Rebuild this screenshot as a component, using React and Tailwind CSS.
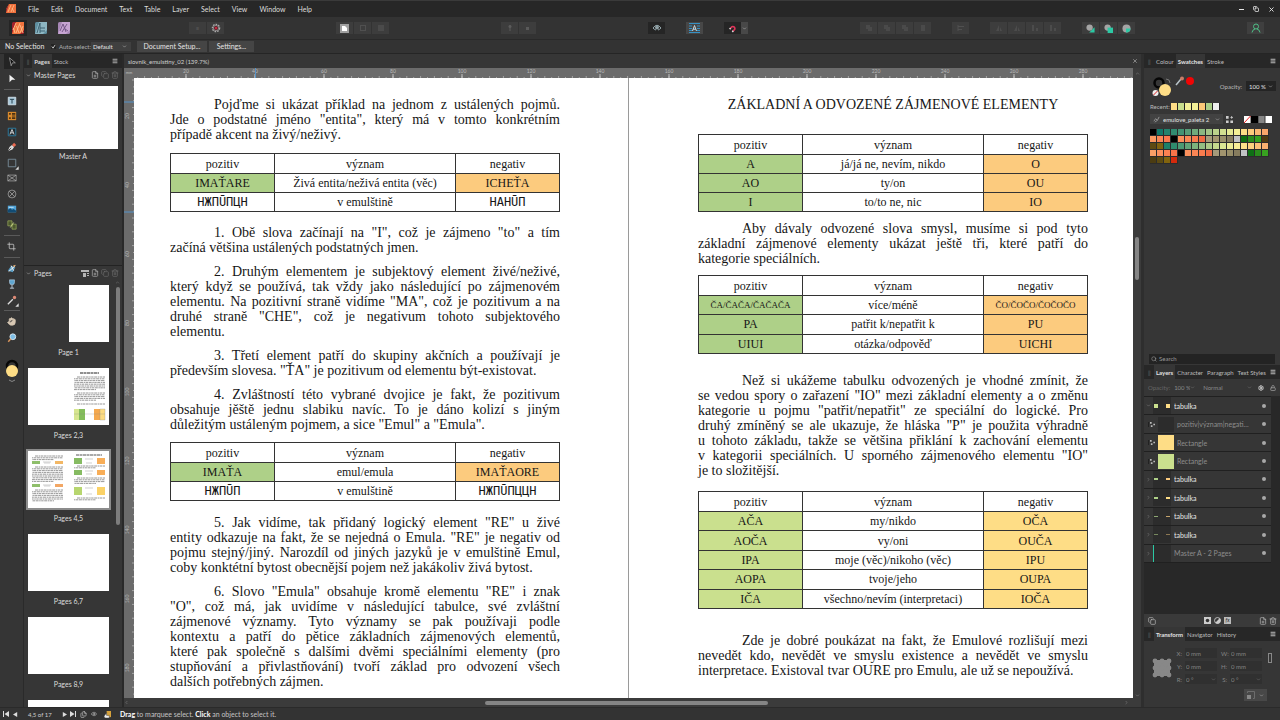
import {
  ChevronDown,
  ChevronRight,
  ChevronLeft,
  ChevronUp,
  Copy,
  Crop,
  Eye,
  FilePlus,
  Files,
  Hand,
  Lock,
  Menu,
  Search,
  Settings,
  Trash2,
  X,
} from 'lucide-react';

const MENU = ['File', 'Edit', 'Document', 'Text', 'Table', 'Layer', 'Select', 'View', 'Window', 'Help'];

const GREEN = 'bg-[#aed088]';
const ORANGE = 'bg-[#fccb7e]';
const LIME = 'bg-[#cae08e]';
const YELLOW = 'bg-[#fedd86]';

const PALETTE = [
  '#000000', '#12786a', '#21826d', '#318a70', '#439374', '#579d78', '#70aa7c', '#8ab781', '#a3c486', '#bbd28b', '#d1df90', '#e4e994', '#f3f096', '#fddc86', '#fdcb7c', '#fbb873', '#faa66a',
  '#fb9861', '#fa8757', '#f9784e', '#000000', '#fb905c', '#fb8755', '#f97b4e', '#f06a42', '#a79c7c', '#a39670', '#99906a', '#857c60', '#c0c2c4', '#0d6d12', '#2a8c1c', '#35a01f', '#4e3b12',
  '#5e4a12', '#80620f', '#1d8069', '#2f8b6d', '#4b9a73', '#62a578', '#7cb27d', '#93be82', '#acca87', '#c4d88c', '#dae592', '#ecec95', '#f8ee96', '#fde08a', '#fdd080', '#fcc078', '#fab06f',
  '#fa9f66', '#fb8f5c', '#fa8152', '#f97449', '#000000', '#fb905c', '#fb8655', '#fa7c4e', '#f06c44', '#a49a7a', '#a1946e', '#978d68', '#867c5e', '#c0c2c4', '#0e7014', '#2a8c1c', '#38a220',
  '#4b3c12', '#5d4b12', '#82640e', '#d42a0c',
];

const LEFT_TABLE_1 = [
  ['IMAŤARE', 'Živá entita/neživá entita (věc)', 'ICHEŤA'],
  ['HЖПŪПЦH', 'v emulštině', 'HAHŪП'],
];
const LEFT_TABLE_2 = [
  ['IMAŤA', 'emul/emula', 'IMAŤAORE'],
  ['HЖПŪП', 'v emulštině', 'HЖПŪПЦЦH'],
];
const BASIC = [
  ['A', 'já/já ne, nevím, nikdo', 'O'],
  ['AO', 'ty/on', 'OU'],
  ['I', 'to/to ne, nic', 'IO'],
];
const SPECIAL = [
  ['ČA/ČAČA/ČAČAČA', 'více/méně', 'ČO/ČOČO/ČOČOČO'],
  ['PA', 'patřit k/nepatřit k', 'PU'],
  ['UIUI', 'otázka/odpověď', 'UICHI'],
];
const DERIVED = [
  ['AČA', 'my/nikdo', 'OČA'],
  ['AOČA', 'vy/oni', 'OUČA'],
  ['IPA', 'moje (věc)/nikoho (věc)', 'IPU'],
  ['AOPA', 'tvoje/jeho', 'OUPA'],
  ['IČA', 'všechno/nevím (interpretaci)', 'IOČA'],
];

function Para({ lines, className = '' }) {
  return (
    <p className={`text-[14px] leading-[15px] ${className}`}>
      {lines.map((line, i) => {
        const last = i === lines.length - 1;
        return (
          <span
            key={i}
            className={`block whitespace-nowrap ${i === 0 ? 'pl-11' : ''} ${last ? '' : '[text-align-last:justify]'}`}
          >
            {line}
          </span>
        );
      })}
    </p>
  );
}

function WordTable({ rows, left, right, className, script }) {
  return (
    <table className={`w-full table-fixed border-collapse text-center text-[12px] leading-4 ${className}`}>
      <colgroup>
        <col className="w-[104px]" />
        <col />
        <col className="w-[104px]" />
      </colgroup>
      <thead>
        <tr>
          {['pozitiv', 'význam', 'negativ'].map((h) => (
            <th key={h} className="h-5 border border-[#333] p-0 font-normal">{h}</th>
          ))}
        </tr>
      </thead>
      <tbody>
        {rows.map((row, i) => {
          const glyphs = script && i === rows.length - 1;
          const side = glyphs
            ? "font-['DejaVu_Sans_Mono',monospace] text-[12px]"
            : row[0].length > 10
              ? 'text-[9px]'
              : 'text-[12px]';
          return (
            <tr key={row[0]}>
              <td className={`border border-[#333] p-0 ${side} ${glyphs ? '' : left}`}>{row[0]}</td>
              <td className="border border-[#333] p-0">{row[1]}</td>
              <td className={`border border-[#333] p-0 ${side} ${glyphs ? '' : right}`}>{row[2]}</td>
            </tr>
          );
        })}
      </tbody>
    </table>
  );
}

function ToolGroup({ children }) {
  return <div className="flex gap-px">{children}</div>;
}

function ToolButton({ label, className = 'w-[17px] bg-[#3d3d3d]', children }) {
  return (
    <button type="button" aria-label={label} className={`flex h-3 items-center justify-center ${className}`}>
      {children}
    </button>
  );
}

function Persona({ from, to, line, d }) {
  return (
    <svg viewBox="0 0 12 12" className="size-3">
      <rect width="12" height="12" rx="1.5" fill={from} />
      <path d="M4 0H12V8L8 12H0Z" fill={to} />
      <path d={d} fill="none" stroke={line} strokeWidth="0.9" />
    </svg>
  );
}

const STRIPES = 'M1 8L4 1M3 11L1.500 6M4 11L8 1M7 11L4.500 4M8 11L11 4M11 11L8 3';

function Toolbar() {
  return (
    <div className="flex h-[23px] shrink-0 items-center border-b border-[#292929] bg-[#333] pr-4 pl-[9px]">
      <div className="flex items-center gap-[5px] pr-1">
        <button type="button" aria-label="Publisher" className="flex h-4 w-[18px] items-center justify-center bg-[#252525]">
          <Persona from="#a3202a" to="#f2733d" line="#ffc08a" d={STRIPES} />
        </button>
        <button type="button" aria-label="Designer" className="flex w-[18px] justify-center">
          <Persona from="#5f8fa0" to="#8db7c3" line="#35596a" d="M2 11L5 1V11M5 6H10M5 9H10" />
        </button>
        <button type="button" aria-label="Photo" className="flex w-[18px] justify-center">
          <Persona from="#a687b5" to="#c6a4d2" line="#6d5080" d="M2 9L5 2L8 10M4 10L9 2M7 7L10 9" />
        </button>
      </div>
      <div className="flex-1" />
      <ToolGroup>
        <ToolButton label="Defaults"><span className="text-[6px] text-[#5a5a5a]">≡</span></ToolButton>
        <ToolButton label="Preflight">
          <svg viewBox="0 0 12 12" className="size-[10px]">
            <circle cx="6" cy="6" r="4.300" fill="none" stroke="#aaa" strokeWidth="1.600" strokeDasharray="2 1.200" />
            <circle cx="6" cy="6" r="3.200" fill="#3a2a2c" stroke="#d0d0d0" strokeWidth="0.600" />
            <circle cx="6" cy="6" r="1.800" fill="#c0283e" />
          </svg>
        </ToolButton>
      </ToolGroup>
      <div className="flex-1" />
      <ToolGroup>
        <ToolButton label="Insert target">
          <svg viewBox="0 0 9 9" className="size-[9px]"><path d="M0 0H9V9H0Z" fill="#a0a0a0" /><path d="M2 2H5L7 4V7H2Z" fill="#fff" /></svg>
        </ToolButton>
        <ToolButton label="Insert behind"><span className="size-[6px] border border-[#505050]" /></ToolButton>
        <ToolButton label="Insert inside"><span className="size-[6px] bg-[#4b4b4b]" /></ToolButton>
      </ToolGroup>
      <div className="flex-1" />
      <ToolGroup>
        <ToolButton label="Pin to text">
          <svg viewBox="0 0 8 8" className="size-2"><path d="M4 1V7" stroke="#5c5c5c" /><circle cx="4" cy="2.500" r="1.500" fill="#5c5c5c" /></svg>
        </ToolButton>
        <ToolButton label="Pin settings"><span className="size-[3px] bg-[#5a5a5a]" /></ToolButton>
      </ToolGroup>
      <div className="flex-1" />
      <div className="flex gap-[21px]">
        <ToolButton label="Preview mode" className="w-[17px] bg-[#252525]">
          <svg viewBox="0 0 10 8" className="h-2 w-[10px]" fill="none" stroke="#93a5aa">
            <path d="M1 4Q5-1.500 9 4Q7 6 6 6M1 4Q2 5.500 4 6" />
            <circle cx="5" cy="3.500" r="1.500" fill="#93a5aa" />
          </svg>
        </ToolButton>
        <ToolButton label="Text frame baseline" className="w-[17px] bg-[#474747]">
          <svg viewBox="0 0 11 10" className="h-[10px] w-[11px]">
            <path d="M0 .5H11M0 3H3M8 3H11M0 5.500H3M8 5.500H11M0 7.500H3M8 7.500H11M0 9.500H11" stroke="#3590c4" />
            <path d="M3.500 8L5.500 2.500L7.500 8M4.200 6.200H6.800" fill="none" stroke="#c6d8e0" />
          </svg>
        </ToolButton>
        <div className="flex">
          <ToolButton label="Snapping" className="w-[17px] bg-[#252525]">
            <svg viewBox="0 0 10 10" className="size-[9px]" fill="none" strokeWidth="1.800">
              <path d="M2.500 5L4.500 3A2.300 2.300 0 0 1 7.500 6L5.500 8" stroke="#e0355a" />
              <path d="M2.800 4.700L1.800 5.700M5.800 7.700L4.800 8.700" stroke="#e8e8e8" />
            </svg>
          </ToolButton>
          <ToolButton label="Snapping options" className="w-[7px] bg-[#484848]"><ChevronDown size={5} color="#ddd" /></ToolButton>
        </div>
      </div>
      <div className="flex-1" />
      <div className="flex gap-[21px]">
        <ToolGroup>
          {['Back one', 'Move back', 'Move forward', 'Bring front'].map((l, i) => (
            <ToolButton key={l} label={l}>
              <svg viewBox="0 0 8 8" className="size-2"><path d={i === 3 ? 'M2 1H6V7H2Z' : 'M1 1H5V3H7V7H3V5H1Z'} fill="#4a4a4a" /></svg>
            </ToolButton>
          ))}
        </ToolGroup>
        <ToolButton label="Alignment"><svg viewBox="0 0 8 8" className="size-2"><path d="M1 1V7M1 2.500H7M1 5.500H5" stroke="#505050" /></svg></ToolButton>
        <ToolGroup>
          {['Flip horizontal', 'Flip vertical', 'Rotate left', 'Rotate right'].map((l, i) => (
            <ToolButton key={l} label={l}>
              <svg viewBox="0 0 8 8" className="size-2"><path d={i < 2 ? 'M1 7L4 1V7ZM5 3L7 7H5Z' : 'M1 1H3V7H1ZM5 4H7V7H5Z'} fill="#4c4c4c" /></svg>
            </ToolButton>
          ))}
        </ToolGroup>
        <ToolGroup>
          <ToolButton label="Add">
            <svg viewBox="0 0 10 10" className="size-[9px]"><path d="M9.500 3.500V9.500H3.500Z" fill="#2cc9a4" /><circle cx="4" cy="4" r="3.500" fill="#a4a4a4" /></svg>
          </ToolButton>
          <ToolButton label="Subtract">
            <svg viewBox="0 0 10 10" className="size-[9px]"><circle cx="4" cy="4" r="3.500" fill="#a4a4a4" /><path d="M4 4H10V10H4Z" fill="#2cc9a4" /></svg>
          </ToolButton>
          <ToolButton label="Intersect">
            <svg viewBox="0 0 10 10" className="size-[9px]"><circle cx="5" cy="5" r="4.500" fill="#a4a4a4" /><path d="M4.500 5H9.500A4.500 4.500 0 0 1 4.500 9.500Z" fill="#2cc9a4" /></svg>
          </ToolButton>
        </ToolGroup>
      </div>
      <div className="flex-1" />
      <ToolButton label="Account" className="w-[17px] bg-[#3f3f3f]">
        <svg viewBox="0 0 10 10" className="size-[10px]" fill="none" stroke="#4fbf87">
          <circle cx="5" cy="3.500" r="2.500" />
          <path d="M1 9.500Q1.500 6.500 4 6M6 6Q8.500 6.500 9 9.500" />
        </svg>
      </ToolButton>
    </div>
  );
}

function ContextBar() {
  return (
    <div className="flex h-[14px] shrink-0 items-center border-b border-[#252525] bg-[#333] pl-[5px] text-[7px] text-[#e4e4e4]">
      <span className="w-[42px] whitespace-nowrap">No Selection</span>
      <label className="ml-1 flex w-[36px] items-center gap-[3px] text-[6px] whitespace-nowrap text-[#b0b0b0]">
        <span className="flex size-[5px] items-center justify-center bg-[#222]">
          <input type="checkbox" defaultChecked className="absolute size-[5px] appearance-none" />
          <svg viewBox="0 0 6 6" className="size-[5px]"><path d="M1 3L2.500 5L5 1" fill="none" stroke="#ddd" /></svg>
        </span>
        Auto-select:
      </label>
      <div className="ml-1 flex h-[9px] w-10 items-center bg-[#404040] pr-1 pl-[2px] text-[6px]">
        <select aria-label="Auto-select" className="min-w-0 flex-1 appearance-none">
          <option>Default</option>
        </select>
        <ChevronDown size={5} />
      </div>
      <button type="button" className="ml-[6px] h-[11px] w-[70px] bg-[#454545] leading-[11px]">Document Setup...</button>
      <button type="button" className="ml-[2px] h-[11px] w-[45px] bg-[#454545] leading-[11px]">Settings...</button>
    </div>
  );
}

const TOOL_GROUPS = [
  {
    height: 'h-8',
    tools: [
      ['Move', <path d="M3 1L10 7H6.500L5 10.500Z" fill="#111" stroke="#bbb" strokeWidth="0.800" />],
      ['Node', <path d="M3 1L10 7H6L3 10Z" fill="#f2f2f2" />],
    ],
  },
  {
    height: 'h-[139px]',
    tools: [
      ['Frame text', <><path d="M1.500 1.500H10.500V10.500H1.500Z" fill="#a9c9da" stroke="#d7e6ee" /><path d="M3.500 4H8.500M6 4V9" stroke="#27414f" strokeWidth="1.200" /></>],
      ['Table', <><path d="M1 1H11V11H1Z" fill="#d88a2c" /><path d="M2.500 2.500H4.500V4.500H2.500ZM2.500 7.500H4.500V9.500H2.500ZM6 2.500H10V4.500H6ZM6 7.500H10V9.500H6ZM6 5.500H10V6.500H6Z" fill="#4a3012" /></>],
      ['Artistic text', <><path d="M1.500 1.500H10.500V10.500H1.500Z" fill="#222b30" stroke="#2f86ad" /><path d="M3.500 9L6 3L8.500 9M4.500 7H7.500" fill="none" stroke="#eee" /></>],
      ['Pen', <><path d="M1 11L3 6L6 3.500L8.500 6L6.500 9Z" fill="#ddd" /><path d="M6 3.500L8.500 1L11 3.500L8.500 6Z" fill="#ec6a50" /><path d="M1 11L5 7" stroke="#333" /></>],
      ['Rectangle', <><path d="M1.500 1.500H10.500V10.500H1.500Z" fill="none" stroke="#7d94a2" /><path d="M14 10V14H10Z" fill="#ddd" /></>],
      ['Picture frame', <path d="M1 2.500H11V9.500H1ZM1 2.500L11 9.500M11 2.500L1 9.500" fill="none" stroke="#b5b5b5" strokeWidth="0.800" />],
      ['Picture ellipse', <><circle cx="6" cy="6" r="4.700" fill="none" stroke="#b5b5b5" strokeWidth="0.800" /><path d="M2.700 2.700L9.300 9.300M9.300 2.700L2.700 9.300" stroke="#b5b5b5" strokeWidth="0.800" /></>],
      ['Place image', <><path d="M1 2H11V10H1Z" fill="#4fa3d8" /><path d="M1 7L4 5L6 7L8 6L11 8V10H1Z" fill="#124c74" /><path d="M2 4H8" stroke="#d5ebf7" /></>],
      ['Data merge', <><path d="M1 1H6V7H1ZM6 5H11V11H6Z" fill="#4c592e" stroke="#a0b060" strokeWidth="0.800" /><path d="M4 9L8 3" stroke="#cbd98a" /></>],
    ],
  },
  { height: 'h-[15px]', tools: [['Vector crop', null]] },
  {
    height: 'h-[46px]',
    tools: [
      ['Fill', <><path d="M1 8L5 2L10 4L7 10Z" fill="#5a9dc4" /><path d="M2 9L10 2M5 2L8 8" stroke="#eee" strokeWidth="1.200" /><path d="M7 2L10 1L9 4Z" fill="#e6a868" /></>],
      ['Transparency', <><path d="M3 1H9V4A3 3 0 0 1 3 4Z" fill="#5fa6d0" stroke="#cde" strokeWidth="0.600" /><path d="M6 7V11M3.500 11H8.500" stroke="#cde" /></>],
      ['Colour picker', <><path d="M1 11L7 5" stroke="#ddd" strokeWidth="1.600" /><circle cx="9" cy="3" r="2" fill="#dd8a76" /><path d="M14 10V14H10Z" fill="#ddd" /></>],
    ],
  },
  {
    height: 'h-[31px]',
    tools: [
      ['View', null],
      ['Zoom', <><circle cx="7" cy="4.500" r="3.500" fill="#7fbfe6" stroke="#e4eef4" /><path d="M4.500 7L1.500 10.500" stroke="#d9955c" strokeWidth="1.800" /></>],
    ],
  },
];

function ToolStrip() {
  return (
    <nav aria-label="Tools" className="flex w-6 shrink-0 flex-col items-center border-r border-[#2a2a2a] bg-[#353535]">
      {TOOL_GROUPS.map((g, i) => (
        <div key={i} className="flex w-full flex-col items-center">
          {i > 0 && <div className="my-[3px] h-px w-4 bg-[#5a5a5a]" />}
          <div className={`flex flex-col justify-between ${g.height}`}>
            {g.tools.map(([name, art]) => (
              <button
                key={name}
                type="button"
                aria-label={name}
                className={`flex h-[15px] w-4 items-center justify-center ${name === 'Move' ? 'bg-[#242424]' : ''}`}
              >
                {name === 'Vector crop' && <Crop size={9} color="#ccc" />}
                {name === 'View' && <Hand size={9} color="#d8c8b4" fill="#d8c8b4" />}
                {art && <svg viewBox="0 0 12 12" className="size-[10px] overflow-visible">{art}</svg>}
              </button>
            ))}
          </div>
        </div>
      ))}
      <svg viewBox="0 0 14 26" className="mt-[14px] h-[26px] w-[14px]" role="img" aria-label="Stroke and fill">
        <circle cx="7" cy="7" r="5" fill="none" stroke="#080808" strokeWidth="2.500" />
        <circle cx="7" cy="12" r="6" fill="#fedd86" />
        <path d="M4 21Q7 24 10 21" fill="none" stroke="#888" />
      </svg>
    </nav>
  );
}

// Greeked text: a run of short marks per line
function Greek({ x, y, lines }) {
  return Array.from({ length: lines }, (_, i) => (
    <path
      key={i}
      d={`M${x + (i === 0 ? 3 : 0)} ${y + i * 1.8}H${x + (i === lines - 1 && lines > 1 ? 22 : 31)}`}
      stroke="#8c8c8c"
      strokeWidth="0.9"
      strokeDasharray="3 .6 1.500 .5 2.400 .6"
      strokeDashoffset={i * 3.7}
    />
  ));
}

function MiniTable({ x, y, h, a, b }) {
  return (
    <>
      <path d={`M${x} ${y}h8v${h}h-8z`} fill={a} />
      <path d={`M${x + 23} ${y}h8v${h}h-8z`} fill={b} />
      <path d={`M${x + 11} ${y + 1}h8M${x + 12} ${y + h - 1}h6`} stroke="#bbb" strokeWidth=".7" />
    </>
  );
}

function SpreadArt({ kind }) {
  if (kind === 'a') {
    return (
      <svg viewBox="0 0 81 57" className="size-full">
        <path d="M52 5H71" stroke="#222" strokeDasharray="3 .5" />
        <Greek x={46} y={9} lines={8} />
        <Greek x={46} y={25} lines={5} />
        <Greek x={46} y={36} lines={1} />
        <path d="M46 41h5v11h-5z" fill="#d7e690" />
        <path d="M51 41h6v11h-6z" fill="#84bd5b" />
        <path d="M66 41h6v11h-6z" fill="#f5a94f" />
        <path d="M72 41h5v11h-5zM46 46h31" fill="#fddb80" stroke="#888" strokeWidth=".3" />
      </svg>
    );
  }
  return (
    <svg viewBox="0 0 81 57" className="size-full">
      <Greek x={4} y={5} lines={3} />
      <MiniTable x={4} y={10} h={3} a="#8fbf6b" b="#f2b765" />
      <Greek x={4} y={16} lines={9} />
      <MiniTable x={4} y={33} h={3} a="#8fbf6b" b="#f2a765" />
      <Greek x={4} y={39} lines={7} />
      <path d="M48 4H74" stroke="#555" strokeDasharray="3 .5" />
      <MiniTable x={46} y={7} h={6} a="#86bb62" b="#f8ae58" />
      <Greek x={46} y={15} lines={2} />
      <MiniTable x={46} y={19} h={5} a="#86bb62" b="#f8ae58" />
      <Greek x={46} y={27} lines={4} />
      <MiniTable x={46} y={36} h={8} a="#b7d66f" b="#fbd267" />
      <Greek x={46} y={47} lines={2} />
    </svg>
  );
}

function Spread({ label, children, selected, single }) {
  return (
    <figure className="flex h-[83px] w-[81px] shrink-0 flex-col items-end">
      <div className={`h-[57px] bg-white ${single ? 'w-10' : 'w-full'} ${selected ? 'outline-2 outline-[#8c8c8c]' : ''}`}>
        {children}
      </div>
      {label && <figcaption className="mt-[5px] w-full text-center text-[7px] leading-[10px]">{label}</figcaption>}
    </figure>
  );
}

function PanelHeading({ title, icons }) {
  return (
    <div className="flex h-[14px] shrink-0 items-center pr-[3px] pl-[2px] text-[7px]">
      <ChevronDown size={5} />
      <h2 className="ml-[3px] flex-1">{title}</h2>
      <div className="flex items-center gap-[2px] text-[#b5b5b5]">
        {icons.map(([label, Icon], i) => (
          <button key={label} type="button" aria-label={label} className={i > icons.length - 3 ? 'text-[#6c6c6c]' : ''}>
            <Icon size={8} />
          </button>
        ))}
      </div>
    </div>
  );
}

function ApplyMasterIcon({ size }) {
  return (
    <svg viewBox="0 0 8 8" width={size} height={size}>
      <path d="M0 1H8V3H0ZM2 4H5V8H2ZM6 4H8V5H6ZM6 6H8V7H6Z" fill="#b5b5b5" />
    </svg>
  );
}

function PagesPanel() {
  return (
    <aside className="flex w-[100px] shrink-0 flex-col border-r-2 border-[#292929] bg-[#363636] text-[#dcdcdc]">
      <div role="tablist" className="flex h-[14px] shrink-0 items-stretch bg-[#272727] text-[6px]">
        <span className="w-2 self-center text-center text-[#666]">‖</span>
        <button type="button" role="tab" aria-selected="true" className="w-[20px] bg-[#363636] font-bold">Pages</button>
        <button type="button" role="tab" className="w-[18px] text-[#bbb]">Stock</button>
        <button type="button" aria-label="Panel menu" className="mr-1 ml-auto"><Menu size={6} color="#aaa" strokeWidth={4} /></button>
      </div>
      <section className="flex h-[198px] shrink-0 flex-col border-b border-[#232323]">
        <PanelHeading title="Master Pages" icons={[['Add master', FilePlus], ['Duplicate master', Copy], ['Delete master', Trash2]]} />
        <figure className="mt-1 ml-1 w-[90px]">
          <div className="h-[63px] bg-white" />
          <figcaption className="mt-[2px] text-center text-[7px] leading-[10px]">Master A</figcaption>
        </figure>
      </section>
      <section className="flex min-h-0 flex-1 flex-col">
        <PanelHeading
          title="Pages"
          icons={[['Apply master', ApplyMasterIcon], ['Add page', FilePlus], ['Duplicate page', Copy], ['Delete page', Trash2]]}
        />
        <div className="flex min-h-0 flex-1 overflow-hidden pl-1">
          <div className="flex flex-col pt-[5px]">
            <Spread label="Page 1" single />
            <Spread label="Pages 2,3"><SpreadArt kind="a" /></Spread>
            <Spread label="Pages 4,5" selected><SpreadArt kind="b" /></Spread>
            <Spread label="Pages 6,7" />
            <Spread label="Pages 8,9" />
            <Spread />
          </div>
          <div className="ml-[6px] flex w-[5px] flex-col items-center">
            <ChevronUp size={5} color="#888" />
            <div className="mt-[2px] h-[238px] w-1 rounded-sm bg-[#7d7d7d]" />
          </div>
        </div>
      </section>
    </aside>
  );
}

const range = (n) => Array.from({ length: n }, (_, i) => i);

function TopRuler() {
  return (
    <svg className="h-[10px] min-w-0 flex-1 bg-[#6b6b6b]" role="img" aria-label="Horizontal ruler">
      {range(150).map((i) => (
        <path key={i} d={`M${(i * 6.9 - 17).toFixed(1)} 10v-${i % 2 ? 1 : 2}`} stroke="#a5a5a5" />
      ))}
      {range(14).map((i) => (
        <g key={i}>
          <path d={`M${52 + i * 69} 10v-4`} stroke="#c4c4c4" />
          <text x={52 + i * 69} y="5" textAnchor="middle" fill="#b9b9b9" className="text-[5px]">{20 + i * 20}</text>
        </g>
      ))}
      <path d="M121.500 0v10" stroke="#5593c9" />
    </svg>
  );
}

function SideRuler() {
  return (
    <svg className="w-[10px] shrink-0 self-stretch bg-[#6b6b6b]" role="img" aria-label="Vertical ruler">
      {range(95).map((i) => (
        <path key={i} d={`M10 ${(i * 6.9 + 2).toFixed(1)}h-${i % 2 ? 1 : 2}`} stroke="#a5a5a5" />
      ))}
      {range(9).map((i) => (
        <text
          key={i}
          textAnchor="middle"
          fill="#b9b9b9"
          className="text-[5px]"
          transform={`translate(5 ${38 + i * 69}) rotate(-90)`}
        >
          {20 + i * 20}
        </text>
      ))}
      <path d="M0 24h10M0 134h10" stroke="#5593c9" />
    </svg>
  );
}

function Document() {
  return (
    <main className="flex min-w-0 flex-1 flex-col bg-[#3b3b3b]">
      <div className="flex h-[14px] shrink-0 items-center bg-[#363636] pr-[3px] pl-1 text-[6px] text-[#d0d0d0]">
        <span className="flex-1">slovnik_emulstiny_02 (139.7%)</span>
        <button type="button" aria-label="Close document"><X size={6} /></button>
      </div>
      <div className="flex shrink-0">
        <span className="w-[10px] bg-[#6b6b6b] text-center text-[4px] leading-[10px] text-[#bbb]">mm</span>
        <TopRuler />
        <div className="flex w-2 items-center justify-center"><ChevronUp size={5} color="#999" /></div>
      </div>
      <div className="flex min-h-0 flex-1">
        <SideRuler />
        <div className="grid min-w-0 flex-1 grid-cols-[minmax(0,495fr)_minmax(0,504fr)] overflow-hidden bg-white font-['Liberation_Serif',serif] text-[#161616]">
          <article className="border-r border-[#9a9a9a] pt-[19px] pr-[68px] pl-9">
            <Para
              lines={[
                'Pojďme si ukázat příklad na jednom z ustálených pojmů.',
                'Jde o podstatné jméno "entita", který má v tomto konkrétním',
                'případě akcent na živý/neživý.',
              ]}
            />
            <WordTable rows={LEFT_TABLE_1} left={GREEN} right={ORANGE} script className="mt-[11px] h-[59px]" />
            <Para
              className="mt-[13px]"
              lines={['1. Obě slova začínají na "I", což je zájmeno "to" a tím', 'začíná většina ustálených podstatných jmen.']}
            />
            <Para
              className="mt-[9px]"
              lines={[
                '2. Druhým elementem je subjektový element živé/neživé,',
                'který když se používá, tak vždy jako následující po zájmenovém',
                'elementu. Na pozitivní straně vidíme "MA", což je pozitivum a na',
                'druhé straně "CHE", což je negativum tohoto subjektového',
                'elementu.',
              ]}
            />
            <Para
              className="mt-[9px]"
              lines={['3. Třetí element patří do skupiny akčních a používají je', 'především slovesa. "ŤA" je pozitivum od elementu být-existovat.']}
            />
            <Para
              className="mt-[9px]"
              lines={[
                '4. Zvláštností této vybrané dvojice je fakt, že pozitivum',
                'obsahuje jěště jednu slabiku navíc. To je dáno kolizí s jiným',
                'důležitým ustáleným pojmem, a sice "Emul" a "Emula".',
              ]}
            />
            <WordTable rows={LEFT_TABLE_2} left={GREEN} right={ORANGE} script className="mt-[10px] h-[59px]" />
            <Para
              className="mt-[14px]"
              lines={[
                '5. Jak vidíme, tak přidaný logický element "RE" u živé',
                'entity odkazuje na fakt, že se nejedná o Emula. "RE" je negativ od',
                'pojmu stejný/jiný. Narozdíl od jiných jazyků je v emulštině Emul,',
                'coby konktétní bytost obecnější pojem než jakákoliv živá bytost.',
              ]}
            />
            <Para
              className="mt-[9px]"
              lines={[
                '6. Slovo "Emula" obsahuje kromě elementu "RE" i znak',
                '"O", což má, jak uvidíme v následující tabulce, své zvláštní',
                'zájmenové významy. Tyto významy se pak používaji podle',
                'kontextu a patří do pětice základních zájmenových elementů,',
                'které pak společně s dalšími dvěmi speciálními elementy (pro',
                'stupňování a přivlastňování) tvoří základ pro odvození všech',
                'dalších potřebných zájmen.',
              ]}
            />
          </article>
          <article className="pt-[19px] pr-[45px] pl-[69px]">
            <h1 className="text-center text-[14px] leading-[15px] whitespace-nowrap">ZÁKLADNÍ A ODVOZENÉ ZÁJMENOVÉ ELEMENTY</h1>
            <WordTable rows={BASIC} left={GREEN} right={ORANGE} className="mt-[22px] h-[78px]" />
            <Para
              className="mt-[9px]"
              lines={[
                'Aby dávaly odvozené slova smysl, musíme si pod tyto',
                'základní zájmenové elementy ukázat ještě tři, které patří do',
                'kategorie speciálních.',
              ]}
            />
            <WordTable rows={SPECIAL} left={GREEN} right={ORANGE} className="mt-[9px] h-[79px]" />
            <Para
              className="mt-[19px]"
              lines={[
                'Než si ukážeme tabulku odvozených je vhodné zmínit, že',
                'se vedou spory o zařazení "IO" mezi základní elementy a o změnu',
                'kategorie u pojmu "patřit/nepatřit" ze speciální do logické. Pro',
                'druhý zmíněný se ale ukazuje, že hláska "P" je použita výhradně',
                'u tohoto základu, takže se většina přiklání k zachování elementu',
                'v kategorii speciálních. U sporného zájmenového elementu "IO"',
                'je to složitější.',
              ]}
            />
            <WordTable rows={DERIVED} left={LIME} right={YELLOW} className="mt-[13px] h-[118px]" />
            <Para
              className="mt-6"
              lines={[
                'Zde je dobré poukázat na fakt, že Emulové rozlišují mezi',
                'nevedět kdo, nevědět ve smyslu existence a nevědět ve smyslu',
                'interpretace. Existoval tvar OURE pro Emulu, ale už se nepoužívá.',
              ]}
            />
          </article>
        </div>
        <div className="flex w-2 flex-col items-center">
          <div className="mt-[159px] h-[43px] w-1 rounded-sm bg-[#858585]" />
          <ChevronDown size={5} color="#999" className="mt-auto" />
        </div>
      </div>
      <div className="flex h-[9px] shrink-0 items-center pr-3">
        <ChevronLeft size={5} color="#999" />
        <div className="flex flex-1 justify-center"><div className="h-1 w-[283px] rounded-sm bg-[#858585]" /></div>
        <ChevronRight size={5} color="#999" />
      </div>
    </main>
  );
}

function PanelTabs({ tabs, active }) {
  return (
    <div role="tablist" className="flex h-[14px] shrink-0 items-stretch bg-[#272727] pl-1 text-[6px] text-[#bdbdbd]">
      <span className="w-[6px] self-center text-[#666]">‖</span>
      {tabs.map((t) => (
        <button
          key={t}
          type="button"
          role="tab"
          aria-selected={t === active}
          className={`px-[2px] whitespace-nowrap ${t === active ? 'bg-[#363636] font-bold text-[#e2e2e2]' : ''}`}
        >
          {t}
        </button>
      ))}
      <button type="button" aria-label="Panel menu" className="mr-1 ml-auto"><Menu size={6} color="#bbb" strokeWidth={4} /></button>
    </div>
  );
}

function SwatchesPanel() {
  return (
    <section className="flex min-h-0 flex-1 flex-col">
      <PanelTabs tabs={['Colour', 'Swatches', 'Stroke']} active="Swatches" />
      <div className="mt-2 flex h-5 shrink-0 items-center pr-1 pl-2">
        <svg viewBox="0 0 44 21" className="h-[21px] w-11" role="img" aria-label="Colour selectors">
          <circle cx="7" cy="7" r="4.500" fill="none" stroke="#060606" strokeWidth="2.500" />
          <circle cx="13" cy="14" r="6" fill="#fedd86" />
          <circle cx="3.500" cy="17" r="3" fill="#eee" />
          <path d="M1.500 19L5.500 15" stroke="#d22" />
          <path d="M14 3Q18 3 18 7" fill="none" stroke="#888" strokeWidth=".8" />
          <path d="M24 9L29 3" stroke="#b9c4c9" strokeWidth="1.500" />
          <circle cx="30" cy="2.500" r="2" fill="#c77d68" />
          <circle cx="38" cy="5" r="4" fill="#f00505" />
        </svg>
        <label className="ml-auto flex items-center gap-1 text-[6px] text-[#bbb]">
          Opacity:
          <span className="flex h-[10px] w-[30px] items-center bg-[#242424] px-[3px] text-[#e4e4e4]">
            <input defaultValue="100 %" className="w-0 min-w-0 flex-1" />
            <ChevronDown size={5} />
          </span>
        </label>
      </div>
      <div className="mt-[6px] flex h-2 shrink-0 items-center pl-[6px] text-[6px] text-[#bbb]">
        <span className="w-[21px]">Recent:</span>
        {['#fddc86', '#c8de8c', '#f3f096', '#f3f096', '#fbc778', '#a9cd86', '#eeeeee'].map((c, i) => (
          <span key={i} className="size-[7px] border-r border-[#222]" style={{ background: c }} />
        ))}
      </div>
      <div className="mt-1 flex h-[10px] shrink-0 items-center pr-2 pl-[6px]">
        <div className="flex h-[10px] w-[73px] items-center gap-[3px] bg-[#424242] px-[3px] text-[6px] text-[#e4e4e4]">
          <svg viewBox="0 0 8 8" className="size-[7px]"><path d="M1 6L3 3L5 5L7 1M2 7L5 5" fill="none" stroke="#999" /></svg>
          <select aria-label="Palette" className="min-w-0 flex-1 appearance-none"><option>emulove_paleta 2</option></select>
          <ChevronDown size={5} />
        </div>
        <svg viewBox="0 0 8 8" className="ml-[3px] size-[7px]"><path d="M0 0H3V3H0ZM0 5H3V8H0ZM5 5H8V8H5ZM6 0H7V3H6ZM5 1H8V2H5Z" fill="#ccc" /></svg>
        <svg viewBox="0 0 28 7" className="ml-auto h-[7px] w-7">
          <path d="M0 0H6.500V7H0Z" fill="#fff" />
          <path d="M0 7L6.500 0" stroke="#e22" />
          <path d="M7 0H14V7H7Z" />
          <path d="M14.500 0H20.500V7H14.500Z" fill="#858585" />
          <path d="M21.500 0H28V7H21.500Z" fill="#fff" />
        </svg>
      </div>
      <div className="mt-[5px] ml-[6px] grid w-[119px] grid-cols-[repeat(17,7px)] gap-0">
        {PALETTE.map((c, i) => (
          <button key={i} type="button" aria-label={c} className="size-[7px] border-r border-b border-[#2c2c2c]" style={{ background: c }} />
        ))}
      </div>
    </section>
  );
}

const LAYERS = [
  { name: 'tabulka', open: true, bar: 'h-1', a: 'bg-[#cae08e]', b: 'bg-[#fedd86]' },
  { name: 'pozitiv|význam|negati...', child: true, thumb: 'bg-[#2c2c2c]' },
  { name: 'Rectangle', child: true, thumb: 'bg-[#fedd86]' },
  { name: 'Rectangle', child: true, thumb: 'bg-[#cae08e]' },
  { name: 'tabulka', bar: 'h-[2px]', a: 'bg-[#aed088]', b: 'bg-[#fccb7e]' },
  { name: 'tabulka', bar: 'h-[2px]', a: 'bg-[#aed088]', b: 'bg-[#fedd86]' },
  { name: 'tabulka', bar: 'h-px', a: 'bg-[#8da772]', b: 'bg-[#c5a46c]' },
  { name: 'tabulka', bar: 'h-px', a: 'bg-[#76885f]', b: 'bg-[#8c7853]' },
  { name: 'Master A - 2 Pages', master: true },
];

function LayerRow({ layer }) {
  const dim = layer.child || layer.master;
  return (
    <li className="flex flex-1 items-center border-b border-[#202020] bg-[#363636] pr-[5px] pl-[2px]">
      {layer.child ? (
        <span className="ml-[2px] flex w-[10px] items-center border-l border-[#222] pl-px">
          <svg viewBox="0 0 6 6" className="size-[5px]"><path d="M0 0H2V2H0ZM4 2H6V4H4ZM1 4H3V6H1Z" fill="#bbb" /></svg>
        </span>
      ) : (
        <span className="w-[7px] text-[#999]">{layer.open ? <ChevronDown size={5} /> : <ChevronRight size={5} />}</span>
      )}
      {layer.child ? (
        <span className={`h-[15px] w-4 ${layer.thumb}`} />
      ) : (
        <span className={`flex h-[17px] w-[18px] items-center justify-between bg-[#2c2c2c] ${layer.master ? 'border-l border-[#2cc9a4]' : 'px-px'}`}>
          {layer.bar && <><i className={`w-1 ${layer.bar} ${layer.a}`} /><i className={`w-1 ${layer.bar} ${layer.b}`} /></>}
        </span>
      )}
      <span className={`ml-[3px] flex-1 truncate text-[7px] leading-[10px] ${dim ? 'text-[#8d8d8d]' : 'text-[#e6e6e6]'}`}>{layer.name}</span>
      <button type="button" aria-label={`Toggle ${layer.name}`} className="size-1 rounded-full bg-[#a8a8a8]" />
    </li>
  );
}

function LayersPanel() {
  return (
    <section className="flex h-[275px] shrink-0 flex-col bg-[#282828]">
      <div className="flex h-[13px] shrink-0 items-center bg-[#363636] px-[5px]">
        <label className="flex h-[10px] flex-1 items-center gap-[2px] bg-[#232323] px-[2px] text-[6px] text-[#aaa]">
          <Search size={6} />
          <input aria-label="Search layers" placeholder="Search" className="w-0 min-w-0 flex-1 placeholder:text-[#999]" />
        </label>
      </div>
      <PanelTabs tabs={['Layers', 'Character', 'Paragraph', 'Text Styles']} active="Layers" />
      <div className="flex h-[17px] shrink-0 items-center bg-[#363636] pr-1 pl-1 text-[6px] text-[#8a8a8a]">
        <label className="flex items-center gap-1 text-[#666]">
          Opacity:
          <input defaultValue="100 %" className="w-4 text-[#8a8a8a]" />
        </label>
        <ChevronDown size={5} />
        <select aria-label="Blend mode" className="ml-2 min-w-0 flex-1 appearance-none"><option>Normal</option></select>
        <ChevronDown size={5} />
        <Settings size={6} color="#ccc" strokeWidth={4} className="mx-[6px]" />
        <Lock size={6} color="#999" strokeWidth={3} />
      </div>
      <ul className="mr-[9px] flex h-[167px] shrink-0 flex-col border-t border-[#202020]">
        {LAYERS.map((layer, i) => (
          <LayerRow key={i} layer={layer} />
        ))}
      </ul>
      <div className="mt-auto flex h-[13px] shrink-0 items-center bg-[#3a3a3a] pr-[3px] pl-1 text-[#bbb]">
        <button type="button" aria-label="Edit all layers"><Copy size={8} /></button>
        <div className="mx-auto flex gap-[3px] pl-5">
          <button type="button" aria-label="Mask"><svg viewBox="0 0 8 8" className="size-[7px]"><path d="M0 0H8V8H0Z" fill="#ccc" /><circle cx="4" cy="4" r="2" fill="#333" /></svg></button>
          <button type="button" aria-label="Adjustments"><svg viewBox="0 0 8 8" className="size-[7px]"><circle cx="4" cy="4" r="3.400" fill="none" stroke="#ccc" /><path d="M6.500 1.500A3.400 3.400 0 0 1 1.500 6.500Z" fill="#ccc" /></svg></button>
          <button type="button" aria-label="Effects" className="size-[7px] bg-[#bbb] text-[5px] leading-[7px] text-[#222] italic">fx</button>
        </div>
        <button type="button" aria-label="Add layer"><FilePlus size={8} /></button>
        <button type="button" aria-label="Delete layer" className="ml-[2px]"><Trash2 size={8} /></button>
      </div>
    </section>
  );
}

function Field({ label, value, chevron }) {
  return (
    <label className="flex items-center gap-[3px]">
      <span className="w-[6px] text-right">{label}:</span>
      <span className="flex h-[10px] w-8 items-center bg-[#303030] px-px">
        <input defaultValue={value} className="w-0 min-w-0 flex-1" />
        {chevron && <ChevronDown size={5} />}
      </span>
    </label>
  );
}

function TransformPanel() {
  return (
    <section className="flex h-20 shrink-0 flex-col bg-[#363636]">
      <PanelTabs tabs={['Transform', 'Navigator', 'History']} active="Transform" />
      <div className="flex pt-[7px] pl-2 text-[6px] text-[#858585]">
        <svg viewBox="0 0 20 20" className="mt-[10px] size-5">
          <path d="M2 2H18V18H2Z" fill="#888" />
          {[1, 8, 15].map((x) => [1, 8, 15].map((y) => <circle key={`${x}${y}`} cx={x + 2} cy={y + 2} r="2.400" fill="#888" />))}
        </svg>
        <div className="ml-1 grid grid-cols-2 gap-x-1 gap-y-[3px]">
          <Field label="X" value="0 mm" />
          <Field label="W" value="0 mm" />
          <Field label="Y" value="0 mm" />
          <Field label="H" value="0 mm" />
          <Field label="R" value="0 °" chevron />
          <Field label="S" value="0 °" chevron />
        </div>
        <span className="mt-[5px] ml-[6px] h-[10px] w-1 border border-[#888]" />
      </div>
      <button type="button" aria-label="Cycle selection box" className="mt-[5px] mr-[13px] flex h-3 w-[23px] shrink-0 items-center justify-between self-end bg-[#484848] px-[3px]">
        <svg viewBox="0 0 8 8" className="size-2"><path d="M.5 2V.5H7.500V7.500H6" fill="none" stroke="#6d6d6d" /><path d="M0 4H4V8H0Z" fill="#888" /></svg>
        <ChevronDown size={5} color="#ccc" />
      </button>
    </section>
  );
}

function StatusBar() {
  return (
    <footer className="flex h-[13px] shrink-0 items-center border-t border-[#2a2a2a] bg-[#333] pl-[3px] text-[6px] text-[#d0d0d0]">
      <button type="button" aria-label="First page"><svg viewBox="0 0 6 6" className="size-[6px]"><path d="M0 0H1V6H0ZM6 0V6L1.500 3Z" fill="#ddd" /></svg></button>
      <button type="button" aria-label="Previous page" className="ml-1"><svg viewBox="0 0 6 6" className="size-[5px]"><path d="M5 0V6L0 3Z" fill="#ddd" /></svg></button>
      <span className="ml-[10px] w-[32px]">4,5 of 17</span>
      <button type="button" aria-label="Next page" className="ml-[2px]"><svg viewBox="0 0 6 6" className="size-[5px]"><path d="M1 0V6L6 3Z" fill="#ddd" /></svg></button>
      <button type="button" aria-label="Last page" className="ml-[3px]"><svg viewBox="0 0 6 6" className="size-[6px]"><path d="M0 0V6L4.500 3ZM5 0H6V6H5Z" fill="#ddd" /></svg></button>
      <Files size={7} className="ml-1" />
      <span className="ml-1 flex"><Eye size={6} /></span>
      <svg viewBox="0 0 8 8" className="ml-[7px] size-[7px]"><path d="M3 0H8V7H3Z" fill="#d6a23c" /><path d="M0 6L3 2V5H6V8H1Z" fill="#eee" stroke="#333" strokeWidth=".5" /></svg>
      <p className="ml-[9px] text-[7px] text-[#c4c4c4]">
        <b className="text-white">Drag</b> to marquee select. <b className="text-white">Click</b> an object to select it.
      </p>
    </footer>
  );
}

export default function App() {
  return (
    <div className="flex h-screen flex-col overflow-hidden bg-[#333] font-['Lato','Open_Sans',sans-serif] text-[#dcdcdc]">
      <header className="flex h-[17px] shrink-0 items-center border-t border-[#3a3a3a] bg-[#272727] pr-[5px] pl-[6px]">
        <svg viewBox="0 0 10 10" className="size-[10px]">
          <path d="M3 0H10V9H0V5Z" fill="#f0703c" />
          <path d="M3 0L0 5V9Z" fill="#8f2430" />
          <path d="M2 8L5 1M5 8L8 1M8 8L6 4" stroke="#ffc08a" strokeWidth=".8" />
        </svg>
        <nav className="ml-3 flex gap-3 text-[7px]">
          {MENU.map((m) => (
            <button key={m} type="button">{m}</button>
          ))}
        </nav>
        <div className="ml-auto flex items-center gap-[9px] text-[#e8e8e8]">
          <button type="button" aria-label="Minimise" className="h-px w-[5px] bg-[#e8e8e8]" />
          <button type="button" aria-label="Restore"><Copy size={6} strokeWidth={3} /></button>
          <button type="button" aria-label="Close"><X size={7} strokeWidth={3} /></button>
        </div>
      </header>
      <Toolbar />
      <ContextBar />
      <div className="flex min-h-0 flex-1">
        <ToolStrip />
        <PagesPanel />
        <Document />
        <aside className="flex w-[139px] shrink-0 flex-col border-l-[3px] border-[#2e2e2e] bg-[#363636]">
          <SwatchesPanel />
          <LayersPanel />
          <TransformPanel />
        </aside>
      </div>
      <StatusBar />
    </div>
  );
}
